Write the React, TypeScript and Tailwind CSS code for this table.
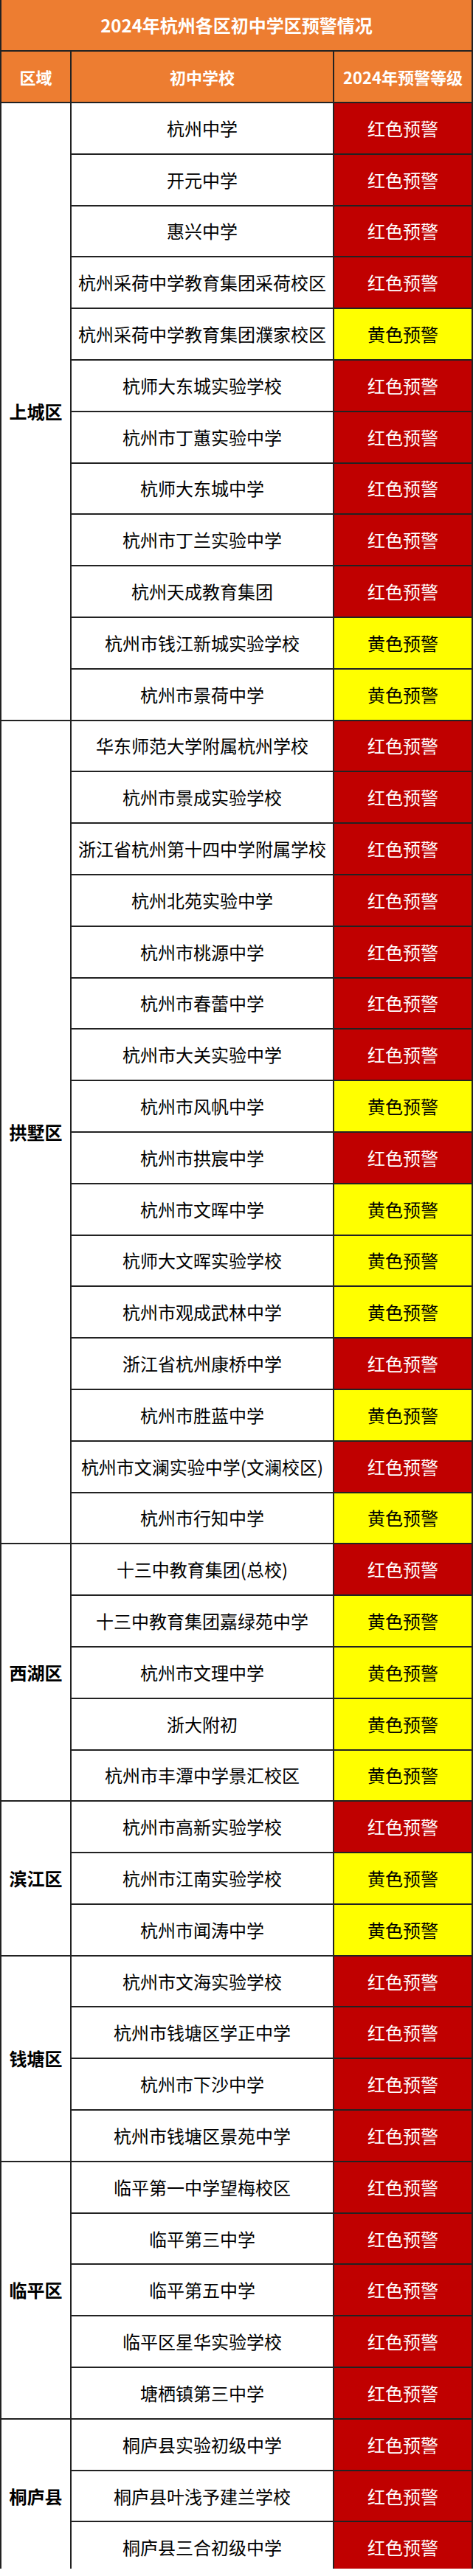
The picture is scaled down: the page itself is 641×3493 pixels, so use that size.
import React from "react";

type School = { name: string; level: "r" | "y" };
type Group = { district: string; schools: School[] };

const r = (name: string): School => ({ name, level: "r" });
const y = (name: string): School => ({ name, level: "y" });

const groups: Group[] = [
  {
    district: "上城区",
    schools: [
      r("杭州中学"),
      r("开元中学"),
      r("惠兴中学"),
      r("杭州采荷中学教育集团采荷校区"),
      y("杭州采荷中学教育集团濮家校区"),
      r("杭师大东城实验学校"),
      r("杭州市丁蕙实验中学"),
      r("杭师大东城中学"),
      r("杭州市丁兰实验中学"),
      r("杭州天成教育集团"),
      y("杭州市钱江新城实验学校"),
      y("杭州市景荷中学"),
    ],
  },
  {
    district: "拱墅区",
    schools: [
      r("华东师范大学附属杭州学校"),
      r("杭州市景成实验学校"),
      r("浙江省杭州第十四中学附属学校"),
      r("杭州北苑实验中学"),
      r("杭州市桃源中学"),
      r("杭州市春蕾中学"),
      r("杭州市大关实验中学"),
      y("杭州市风帆中学"),
      r("杭州市拱宸中学"),
      y("杭州市文晖中学"),
      y("杭师大文晖实验学校"),
      y("杭州市观成武林中学"),
      r("浙江省杭州康桥中学"),
      y("杭州市胜蓝中学"),
      r("杭州市文澜实验中学(文澜校区)"),
      y("杭州市行知中学"),
    ],
  },
  {
    district: "西湖区",
    schools: [
      r("十三中教育集团(总校)"),
      y("十三中教育集团嘉绿苑中学"),
      y("杭州市文理中学"),
      y("浙大附初"),
      y("杭州市丰潭中学景汇校区"),
    ],
  },
  {
    district: "滨江区",
    schools: [r("杭州市高新实验学校"), y("杭州市江南实验学校"), y("杭州市闻涛中学")],
  },
  {
    district: "钱塘区",
    schools: [
      r("杭州市文海实验学校"),
      r("杭州市钱塘区学正中学"),
      r("杭州市下沙中学"),
      r("杭州市钱塘区景苑中学"),
    ],
  },
  {
    district: "临平区",
    schools: [
      r("临平第一中学望梅校区"),
      r("临平第三中学"),
      r("临平第五中学"),
      r("临平区星华实验学校"),
      r("塘栖镇第三中学"),
    ],
  },
  {
    district: "桐庐县",
    schools: [r("桐庐县实验初级中学"), r("桐庐县叶浅予建兰学校"), r("桐庐县三合初级中学")],
  },
];

export default function App() {
  return (
    <div
      className="w-[641px] bg-white"
      style={{ fontFamily: '"Noto Sans CJK SC", "Noto Sans", sans-serif' }}
    >
      <div className="h-[3483px] overflow-hidden">
        <div className="border-l-2 border-r-2 border-[#222]">
          <div className="h-[70px] bg-[#ED7D31] border-b-2 border-[#222] flex items-center justify-center text-white font-bold text-[24px] leading-none">
            2024年杭州各区初中学区预警情况
          </div>
          <div className="h-[70px] bg-[#ED7D31] border-b-2 border-[#222] flex text-white font-bold text-[22px] leading-none">
            <div className="w-[95px] shrink-0 border-r-2 border-[#222] flex items-center justify-center">
              区域
            </div>
            <div className="w-[356px] shrink-0 border-r-2 border-[#222] flex items-center justify-center">
              初中学校
            </div>
            <div className="flex-1 flex items-center justify-center">2024年预警等级</div>
          </div>
          {groups.map((g) => (
            <div key={g.district} className="flex border-b-2 border-[#222]">
              <div className="w-[95px] shrink-0 border-r-2 border-[#222] flex items-center justify-center font-bold text-[24px] text-black leading-none">
                {g.district}
              </div>
              <div className="flex-1 flex flex-col">
                {g.schools.map((s, i) => (
                  <div
                    key={s.name}
                    className={
                      "flex text-[24px] leading-none " +
                      (i < g.schools.length - 1 ? "h-[69.8px] border-b-2 border-[#222]" : "h-[67.8px]")
                    }
                  >
                    <div className="w-[356px] shrink-0 border-r-2 border-[#222] flex items-center justify-center text-black whitespace-nowrap">
                      {s.name}
                    </div>
                    <div
                      className={
                        "flex-1 flex items-center justify-center " +
                        (s.level === "r" ? "bg-[#C00000] text-white" : "bg-[#FFFF00] text-black")
                      }
                    >
                      {s.level === "r" ? "红色预警" : "黄色预警"}
                    </div>
                  </div>
                ))}
              </div>
            </div>
          ))}
        </div>
      </div>
    </div>
  );
}
